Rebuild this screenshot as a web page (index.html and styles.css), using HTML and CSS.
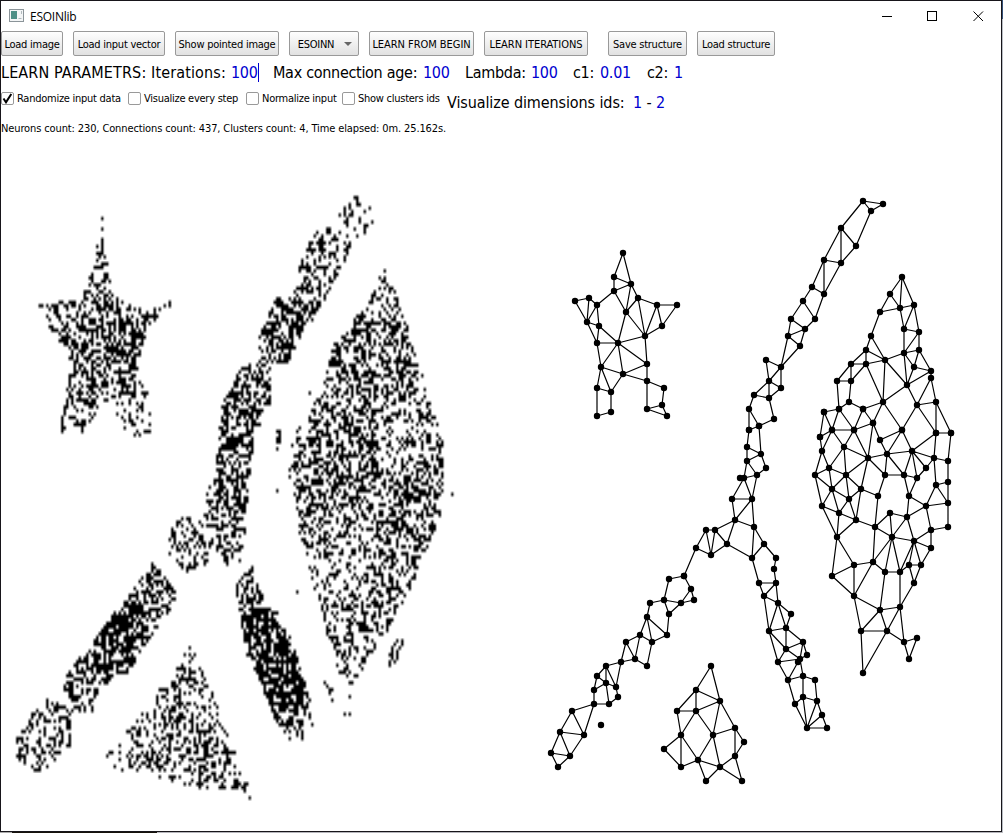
FILE: index.html
```html
<!DOCTYPE html>
<html lang="en">
<head>
<meta charset="utf-8">
<title>ESOINlib</title>
<link rel="stylesheet" href="styles.css">
</head>
<body>
<div class="window">
  <header class="titlebar">
    <svg class="app-icon" width="15" height="13" viewBox="0 0 15 13"><rect x=".5" y=".5" width="14" height="12" fill="#f3f5f6" stroke="#8b9499"/><rect x="2" y="2" width="6" height="8" fill="#4d8f86"/><path d="M9.500 9.500h3M12.500 2v3" stroke="#b0b8bc"/></svg>
    <span class="title">ESOINlib</span>
    <svg class="win-controls" width="103" height="12" viewBox="0 0 103 12" fill="none" stroke="#000"><path d="M0 6.500h10"/><rect x="45.500" y="1.500" width="9" height="9"/><path d="M91.500 1.500l9.500 9.500M101 1.500l-9.500 9.500"/></svg>
  </header>
  <nav class="toolbar">
    <button class="btn w62"><span>Load image</span></button>
    <button class="btn w92"><span>Load input vector</span></button>
    <button class="btn w104"><span>Show pointed image</span></button>
    <button class="btn w70 combo"><span>ESOINN</span><i class="arrow"></i></button>
    <button class="btn w105 caps"><span>LEARN FROM BEGIN</span></button>
    <button class="btn w104 caps"><span>LEARN ITERATIONS</span></button>
    <button class="btn w79 gap"><span>Save structure</span></button>
    <button class="btn w78"><span>Load structure</span></button>
  </nav>
  <section class="params">
    <span class="p-iter">LEARN PARAMETRS: Iterations:</span><b class="v-iter">100</b>
    <span class="p-age">Max connection age:</span><b class="v-age">100</b>
    <span class="p-lambda">Lambda:</span><b class="v-lambda">100</b>
    <span class="p-c1">c1:</span><b class="v-c1">0.01</b>
    <span class="p-c2">c2:</span><b>1</b>
  </section>
  <section class="options">
    <label class="check o1"><i class="box"><svg width="11" height="11" viewBox="0 0 11 11"><path d="M1.500 5.500L4 9.300L9.300 1" fill="none" stroke="#000" stroke-width="2"/></svg></i><span>Randomize input data</span></label>
    <label class="check o2"><i class="box"></i><span>Visualize every step</span></label>
    <label class="check o3"><i class="box"></i><span>Normalize input</span></label>
    <label class="check o4"><i class="box"></i><span>Show clusters ids</span></label>
    <div class="dims"><span class="p-dims">Visualize dimensions ids:</span><b>1 <em>-</em> 2</b></div>
  </section>
  <p class="status"><span>Neurons count: 230, Connections count: 437, Clusters count: 4, Time elapsed: 0m. 25.162s.</span></p>
  <main class="views">
    <canvas class="samples" id="samples" width="200" height="200"></canvas>
    <svg class="network" id="network" width="500" height="698" viewBox="501 133 500 698"></svg>
  </main>
</div>
<div class="desk-right"></div>
<div class="desk-bottom"></div>
<script src="app.js"></script>
</body>
</html>
```
FILE: styles.css
```css
* { box-sizing: border-box; }
body {
  margin: 0;
  width: 1003px;
  height: 833px;
  overflow: hidden;
  display: grid;
  grid-template-columns: 1002px 1px;
  grid-template-rows: 832px 1px;
  background: #bfc0c4;
  color: #000;
  font-family: "DejaVu Sans Condensed", "DejaVu Sans", sans-serif;
  font-size: 11px;
}
.window {
  border: 1px solid #17151a;
  background: #fff;
  display: flex;
  flex-direction: column;
}
.desk-right { background: linear-gradient(#345078 19px, #b9bdc4 19px); }
.desk-bottom { background: linear-gradient(90deg, #aaa 12px, #17130c 12px, #17130c 157px, #b5b5bb 157px); }
.titlebar {
  height: 30px;
  display: flex;
  align-items: center;
  padding: 0 16px 0 8px;
}
.app-icon { margin-top: -2px; }
.title {
  margin-left: 6px;
  font: 12px "Open Sans", sans-serif;
  letter-spacing: -0.25px;
}
.win-controls { margin-left: auto; margin-top: -1px; }
.toolbar { display: flex; gap: 10px; height: 25px; }
.btn {
  height: 25px;
  padding: 1px 0 0;
  border: 1px solid #999;
  border-radius: 2px;
  background: linear-gradient(#fefefe, #e1e1e1);
  font: inherit;
  color: #000;
  display: flex;
  align-items: center;
  justify-content: center;
  white-space: nowrap;
  letter-spacing: -0.25px;
}
.caps { letter-spacing: -0.05px; }
.w62 { width: 62px; }
.w70 { width: 70px; }
.w78 { width: 78px; }
.w79 { width: 79px; }
.w92 { width: 92px; }
.w104 { width: 104px; }
.w105 { width: 105px; }
.gap { margin-left: 10px; }
.combo { gap: 10px; padding-left: 2px; }
.arrow {
  border: 4px solid transparent;
  border-top-color: #666;
  border-bottom: 0;
}
.params {
  display: flex;
  align-items: center;
  height: 32px;
  font-size: 16px;
  white-space: nowrap;
  letter-spacing: -0.3px;
}
.params span, .params b { flex: none; }
b { font-weight: 400; color: #0000d0; }
.p-iter { width: 230px; letter-spacing: 0.13px; }
.v-iter { width: 28px; border-right: 1px solid #0000d0; margin-right: 14px; }
.p-age { width: 150px; }
.v-age { width: 42px; }
.p-lambda { width: 66px; }
.v-lambda { width: 42px; }
.p-c1 { width: 27px; }
.v-c1 { width: 47px; }
.p-c2 { width: 27px; }
.options {
  display: flex;
  height: 28px;
  align-items: flex-start;
  white-space: nowrap;
}
.check {
  display: flex;
  align-items: center;
  gap: 3px;
  height: 20px;
  flex: none;
  letter-spacing: -0.26px;
}
.box {
  width: 13px;
  height: 13px;
  border: 1px solid #999;
  border-radius: 2px;
  display: grid;
  place-items: center;
}
.o1 { width: 127px; }
.o2 { width: 118px; }
.o3 { width: 96px; }
.o4 { width: 105px; }
.dims {
  display: flex;
  font-size: 16px;
  line-height: 29px;
  letter-spacing: -0.1px;
}
.p-dims { width: 186px; }
em { font-style: normal; color: #000; }
.status {
  margin: 0;
  height: 16px;
  margin-bottom: 1px;
  line-height: 25px;
  letter-spacing: -0.12px;
  white-space: nowrap;
}
.views { display: flex; }
.samples, .network { width: 500px; height: 698px; flex: none; display: block; }
```
FILE: app.js
```js
// Sampled shapes: density followed by a polygon in window coordinates; later entries override earlier ones.
const regions = [
  [.38, 101,218, 112,285, 118,300, 132,304, 158,318, 142,345, 136,378, 153,398, 150,433, 130,433, 103,398, 85,433, 62,430, 62,395, 72,362, 36,308, 46,300, 82,300, 95,260],
  [.25, 146,318, 158,304, 176,300, 160,318],
  [.5, 85,300, 118,298, 142,325, 135,375, 128,395, 105,392, 82,410, 70,405, 75,370, 68,335, 45,318, 60,303],
  [.28, 62,402, 90,400, 88,434, 62,432],
  [.22, 112,400, 153,395, 150,434, 128,436],
  [.75, 132,330, 142,330, 139,350, 131,348],
  [.72, 82,400, 105,388, 100,398, 86,408],
  [.75, 116,375, 134,378, 132,392, 122,390],
  [.33, 350,195, 367,199, 376,222, 370,236, 341,237, 339,215],
  [.43, 322,227, 341,230, 353,245, 340,270, 325,300, 311,323, 291,318, 296,274, 309,240],
  [.6, 276,298, 304,293, 309,318, 288,362, 262,362, 258,338],
  [.46, 245,360, 272,358, 272,402, 254,435, 250,483, 242,560, 224,565, 203,535, 206,495, 217,455, 222,405],
  [.57, 236,395, 258,400, 252,430, 238,446, 221,440, 224,410],
  [.53, 211,490, 242,490, 240,530, 225,535, 205,528],
  [.33, 174,520, 193,516, 212,532, 207,565, 187,572, 166,555],
  [.46, 151,562, 177,585, 174,604, 150,640, 134,670, 110,680, 94,712, 70,710, 62,680, 86,650, 112,615, 140,580],
  [.73, 122,606, 148,598, 150,620, 128,655, 115,672, 95,668, 92,642],
  [.36, 32,714, 47,700, 75,704, 70,746, 38,775, 17,758, 17,735],
  [.5, 244,574, 253,566, 257,584, 270,610, 289,634, 303,675, 315,715, 310,736, 292,742, 278,728, 261,685, 247,655, 239,615, 234,590],
  [.75, 250,608, 276,606, 291,650, 303,690, 299,710, 272,712, 257,670, 243,640],
  [.33, 284,711, 300,708, 313,720, 308,740, 282,740],
  [.32, 191,641, 207,680, 225,725, 248,785, 245,791, 193,787, 149,774, 101,767, 112,744, 134,723, 149,700, 171,678],
  [.43, 170,698, 190,704, 195,730, 227,740, 230,765, 192,755, 154,770, 145,745],
  [.38, 384,268, 399,300, 416,355, 430,400, 442,435, 444,480, 440,525, 426,550, 413,585, 392,625, 371,654, 350,690, 337,668, 324,625, 310,570, 301,525, 289,475, 293,438, 315,403, 332,365, 346,330, 370,300],
  [.45, 335,340, 370,320, 390,290, 415,355, 430,410, 400,400, 370,420, 340,490, 300,530, 292,470, 315,420],
  [.49, 350,400, 378,410, 386,470, 340,520, 302,510, 308,442],
  [.46, 388,485, 443,440, 439,515, 415,555, 385,530],
  [.26, 376,425, 425,415, 425,460, 380,475],
  [.22, 318,550, 360,540, 374,585, 330,600, 313,590],
  [.4, 400,630, 405,643, 397,660, 388,668, 388,650],
  [.8, 276,430, 280,430, 280,443, 276,443],
  [.7, 295,584, 300,593, 299,602, 296,595],
  [.7, 322,680, 333,690, 331,698]
];
const strays = [[102,220],[101,228],[451,493],[277,448],[277,490],[250,798],[345,713],[350,713],[350,697],[300,531],[302,538],[310,548],[310,392],[331,700]];

const left = 1, top0 = 133, cellW = 2.5, cellH = 3.49;
const canvas = document.getElementById("samples");
const ctx = canvas.getContext("2d");
let seed = 7;
const rand = () => (seed = (seed * 16807) % 2147483647) / 2147483647;

function inside(p, x, y) {
  let hit = false;
  for (let i = 1, j = p.length - 2; i < p.length; j = i, i += 2) {
    if ((p[i + 1] > y) !== (p[j + 1] > y) &&
        x < (p[j] - p[i]) * (y - p[i + 1]) / (p[j + 1] - p[i + 1]) + p[i]) hit = !hit;
  }
  return hit;
}
for (let r = 0; r < 200; r++) {
  for (let c = 0; c < 200; c++) {
    const x = left + (c + .5) * cellW, y = top0 + (r + .5) * cellH;
    let density = 0;
    for (const p of regions) if (inside(p, x, y)) density = p[0];
    if (rand() < density) ctx.fillRect(c, r, 1, 1);
  }
}
for (const [x, y] of strays) ctx.fillRect(Math.floor((x - left) / cellW), Math.floor((y - top0) / cellH), 1, 1);

// Network parts: origin, nodes in thirds of a pixel from it, and links between node indices.
const parts = [
  { at: [540,190],
    nodes: "249,188 222,261 273,282 222,303 294,324 105,333 147,324 171,345 351,345 411,345 258,366 141,396 177,408 366,408 315,438 171,459 234,459 321,522 183,531 249,552 321,573 171,594 213,606 372,594 366,645 321,657 381,678 213,666 171,678",
    links: "0-1 0-2 1-2 1-3 2-3 2-4 2-10 3-10 3-7 4-10 4-14 4-8 10-14 10-16 5-6 5-11 6-11 6-7 7-11 7-12 11-12 11-15 12-15 12-16 15-16 15-18 16-18 16-19 16-17 16-14 14-17 14-8 14-13 8-9 8-13 9-13 17-20 17-19 18-19 18-21 18-22 19-22 19-20 21-22 21-28 22-27 27-28 20-23 20-25 23-24 24-25 24-26 25-26" },
  { at: [740,190],
    nodes: "369,33 429,42 393,63 303,114 348,168 252,210 303,219 216,291 252,312 189,333 153,387 225,387 195,417 144,438 180,468 78,510 123,531 87,573 123,594 42,615 87,624 27,657 102,687 57,708 27,720",
    links: "0-1 0-2 1-2 0-3 2-4 3-4 3-5 3-6 4-6 5-6 5-7 5-8 6-8 7-8 7-9 8-11 9-10 9-11 10-12 11-12 10-13 12-13 12-14 13-14 13-16 14-16 15-16 15-17 16-17 16-18 17-18 17-19 17-20 18-20 19-20 19-21 20-22 21-23 21-24 22-23 23-24" },
  { at: [740,190],
    nodes: "486,261 450,312 522,345 480,354 420,366 492,417 537,426 393,438 378,480 537,480 492,489 435,510 333,522 378,522 522,531 573,543 573,564 291,573 333,573 501,585 327,636 429,636 588,636 531,645 297,657 369,657 252,666 399,699 276,720 342,720 486,720 588,729 633,729 240,741",
    links: "0-1 0-2 0-3 1-3 1-4 3-4 2-3 2-5 2-6 3-5 5-6 5-10 6-9 6-10 9-10 4-7 7-8 7-11 8-11 8-12 8-13 11-13 12-13 12-17 12-18 13-18 17-18 10-11 10-19 10-14 9-14 9-15 14-15 14-19 15-19 15-16 16-23 16-22 19-23 19-21 11-19 11-21 13-21 18-20 17-24 20-24 20-25 21-25 22-23 22-31 22-32 23-31 23-30 21-30 21-27 25-27 25-29 24-26 24-28 24-29 26-28 26-33 27-29 28-29 31-32 28-33" },
  { at: [790,400],
    nodes: "102,36 147,27 219,27 249,69 126,90 192,90 336,90 438,99 483,99 90,111 270,120 162,141 96,153 366,153 291,162 234,174 432,174 474,183 117,204 408,204 75,225 168,225 285,225 342,225 381,234 474,246 438,255 126,267 213,267 264,288 357,288 177,297 474,309 96,318 408,318 147,339 300,339 351,351 198,360 255,381 474,381 423,390 141,411 306,411 372,423 423,444 249,486 192,495 357,495 393,495 285,516 330,516 126,528 372,549 192,588 330,621 270,630 213,693 291,693 381,714 342,726 357,777 219,819",
    links: "9-12 4-12 4-11 5-11 3-15 5-15 3-10 10-14 10-6 6-14 6-13 13-7 7-16 8-17 16-17 12-18 12-20 18-20 18-11 11-21 11-15 18-21 18-27 20-27 20-33 21-27 21-15 21-28 21-31 27-31 27-33 27-35 28-31 28-29 28-15 28-38 31-38 31-35 33-35 33-42 35-38 35-42 38-42 38-39 15-14 15-22 14-22 14-23 14-13 13-23 13-24 13-19 13-16 22-23 23-24 19-24 19-16 24-30 23-30 22-29 29-39 16-26 17-25 25-26 25-32 26-32 26-34 32-34 30-34 30-37 34-37 34-41 32-40 40-41 41-44 41-45 44-45 36-37 36-39 36-43 37-43 37-44 39-43 39-46 43-44 43-46 43-50 43-51 44-51 44-48 44-49 48-49 45-49 48-51 48-53 49-53 53-55 50-51 51-55 50-56 46-50 46-47 46-54 47-54 47-52 42-47 42-52 52-54 54-56 54-57 55-56 55-58 56-57 56-58 57-58 57-62 58-62 55-60 58-60 59-60 59-61 60-61" },
  { at: [660,400],
    nodes: "297,78 267,90 261,141 303,162 261,183 318,204 291,225 240,234 252,234 216,297 276,297 225,360 282,381 138,390 165,390 312,432 201,432 108,444 153,465 276,474 348,474 342,507 72,528 297,549 348,549 312,588 354,609 393,642 378,684 327,693 429,726 378,747 441,765 420,777 414,786 354,786 429,828 384,840 465,840 429,891 471,903 405,912 486,945 441,984 501,984",
    links: "0-3 1-2 2-3 2-4 3-4 3-5 5-6 4-6 4-8 6-8 7-8 8-9 8-10 6-10 9-10 9-11 10-11 10-12 11-12 11-14 11-16 13-14 13-17 13-18 14-18 14-16 16-18 17-18 17-22 16-19 12-19 12-15 15-19 15-20 20-21 21-24 19-23 23-24 23-25 24-25 24-26 25-26 25-29 26-29 26-28 26-27 27-28 28-29 28-31 28-30 29-31 29-35 30-31 30-32 30-33 31-35 31-33 35-33 32-33 33-34 35-37 34-37 33-36 36-37 36-38 36-39 37-41 38-40 39-40 39-41 39-43 41-43 40-43 40-42 42-43 42-44 43-44" },
  { at: [530,560],
    nodes: "417,57 462,48 483,87 360,129 402,120 453,129 492,120 417,162 351,171 330,225 411,225 288,246 366,246 315,297 273,306 351,318 228,318 201,348 228,369 258,381 192,390 264,411 192,432 237,432 126,453 213,495 90,516 162,525 63,579 120,588 84,621",
    links: "0-1 1-2 0-4 3-4 4-5 4-7 2-5 2-6 5-6 5-7 3-8 7-10 8-9 8-10 8-12 9-11 9-12 9-13 10-12 11-13 11-14 13-14 13-15 12-15 14-16 14-19 16-17 16-18 16-19 17-18 17-20 18-20 18-19 18-23 20-22 19-21 21-23 22-23 22-24 22-27 24-26 24-27 26-27 26-28 26-29 27-29 28-29 28-30 29-30" },
  { at: [530,560],
    nodes: "543,318 498,390 570,423 441,453 498,453 615,504 453,525 549,525 642,546 402,567 615,588 504,600 453,621 570,621 528,663 636,663",
    links: "0-1 0-2 1-2 1-3 1-4 2-4 3-4 3-6 4-6 4-7 2-7 2-5 5-7 5-8 5-10 8-10 6-9 6-11 6-12 9-12 7-11 7-13 11-12 11-13 11-14 13-14 13-10 13-15 10-15" }
];
let markup = "";
for (const part of parts) {
  const pts = part.nodes.split(" ").map(s => s.split(",").map((v, i) => part.at[i] + Math.round(v / 3)));
  const d = part.links.split(" ").map(l => {
    const [a, b] = l.split("-");
    return `M${pts[a]}L${pts[b]}`;
  }).join("");
  markup += `<path d="${d}" stroke="#000" stroke-width="1.2" fill="none"/>`;
  markup += pts.map(([x, y]) => `<circle cx="${x}" cy="${y}" r="3.2"/>`).join("");
}
document.getElementById("network").innerHTML = markup;
```
